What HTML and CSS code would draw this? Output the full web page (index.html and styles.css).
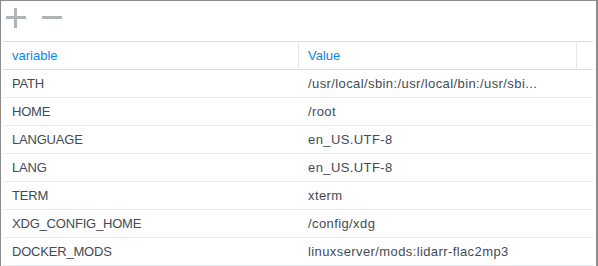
FILE: index.html
```html
<!DOCTYPE html>
<html lang="en">
<head>
    <meta charset="UTF-8">
    <title>Environment</title>
    <link rel="stylesheet" href="styles.css">
</head>
<body>
    <div class="panel">
        <div class="toolbar">
            <span class="tool plus"></span>
            <span class="tool minus"></span>
        </div>
        <div class="grid">
            <div class="head">
                <div class="cell">variable</div>
                <div class="cell">Value</div>
                <div class="cell"></div>
            </div>
            <div class="row"><div class="cell">PATH</div><div class="cell">/usr/local/sbin:/usr/local/bin:/usr/sbi...</div></div>
            <div class="row"><div class="cell">HOME</div><div class="cell">/root</div></div>
            <div class="row"><div class="cell">LANGUAGE</div><div class="cell">en_US.UTF-8</div></div>
            <div class="row"><div class="cell">LANG</div><div class="cell">en_US.UTF-8</div></div>
            <div class="row"><div class="cell">TERM</div><div class="cell">xterm</div></div>
            <div class="row"><div class="cell">XDG_CONFIG_HOME</div><div class="cell">/config/xdg</div></div>
            <div class="row"><div class="cell">DOCKER_MODS</div><div class="cell">linuxserver/mods:lidarr-flac2mp3</div></div>
        </div>
    </div>
</body>
</html>
```

FILE: styles.css
```css
body {
    margin: 0;
    font-family: "Liberation Sans", Arial, sans-serif;
    font-size: 13px;
    color: #414b55;
    background: #fff;
}
.panel {
    width: 595px;
    height: 265px;
    border: 1px solid #8c8c8c;
    border-right-width: 2px;
    overflow: hidden;
}
.toolbar {
    height: 33px;
    display: flex;
    align-items: flex-start;
    gap: 16px;
    padding: 7px 0 0 5px;
}
.tool {
    position: relative;
    width: 20px;
    height: 20px;
}
.tool::before, .plus::after {
    content: "";
    position: absolute;
    background: #b1b5ba;
}
.tool::before {
    left: 0;
    right: 0;
    top: 8px;
    height: 3px;
}
.plus::after {
    top: 0;
    bottom: 0;
    left: 8px;
    width: 3px;
}
.grid {
    margin: 0 3px 0 2px;
}
.head, .row {
    display: grid;
    grid-template-columns: 295px 1fr;
    height: 27px;
    border-top: 1px solid #d7dfe7;
}
.head {
    grid-template-columns: 295px 278px 1fr;
    border-bottom: 1px solid #d7dfe7;
    color: #0a86e6;
}
.row {
    border-top: none;
    border-bottom: 1px solid #e6ebf0;
}
.cell {
    display: flex;
    align-items: center;
    padding-left: 9px;
    white-space: nowrap;
    overflow: hidden;
}
.head .cell + .cell {
    border-left: 1px solid #dfe7ef;
}
.row .cell:first-child {
    letter-spacing: -0.2px;
}
.row .cell + .cell {
    padding-left: 10px;
    letter-spacing: 0.4px;
}
```
